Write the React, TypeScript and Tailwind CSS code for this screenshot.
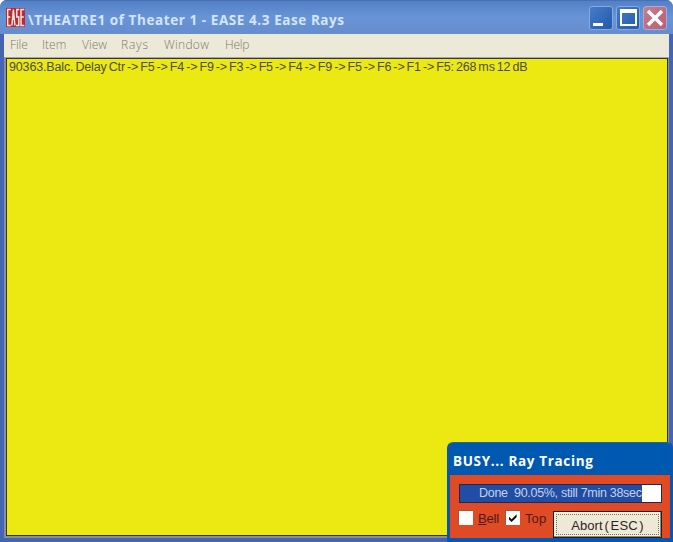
import type { ReactNode } from "react";

const menu = [
  { label: "File", cell: "w-[32px]", spacing: "tracking-[-0.1px]" },
  { label: "Item", cell: "w-[40px]", spacing: "tracking-[0px]" },
  { label: "View", cell: "w-[39px]", spacing: "tracking-[0px]" },
  { label: "Rays", cell: "w-[43px]", spacing: "tracking-[0.8px]" },
  { label: "Window", cell: "w-[61px]", spacing: "tracking-[0.3px]" },
  { label: "Help", cell: "w-[40px]", spacing: "tracking-[-0.2px]" },
];

function EaseLogo() {
  return (
    <svg width="19" height="19" viewBox="0 0 19 19" className="shrink-0">
      <rect width="19" height="19" fill="#bd2931" />
      <g stroke="#f5ece9" strokeWidth="1.4" fill="none">
        <path d="M4.8 1.5H1.7V17.5H4.8M1.7 9H4.3" />
        <path d="M5.9 17.5L7.4 1.5L8.9 17.5M6.3 11H8.6" />
        <path d="M13.2 1.5H10.8V9H12.8V17.5H10" />
        <path d="M18.3 1.5H15V17.5H18.3M15 9H17.8" />
      </g>
    </svg>
  );
}

function CaptionButton({ close = false, children }: { close?: boolean; children: ReactNode }) {
  return (
    <div
      className={
        close
          ? "h-6 w-6 rounded-[3px] border border-[#9bafe0] bg-linear-to-br from-[#cb7b8c] to-[#b95e75]"
          : "h-6 w-6 rounded-[3px] border border-[#83abdf] bg-linear-to-br from-[#457cc8] to-[#2459ac]"
      }
    >
      <svg width="22" height="22" viewBox="0 0 22 22">
        {children}
      </svg>
    </div>
  );
}

function CheckBox({ checked = false }: { checked?: boolean }) {
  return (
    <div className="h-[15px] w-[15px] shrink-0 border-t border-l border-[#9d5742] bg-[#fffdf9]">
      {checked && (
        <svg width="14" height="14" viewBox="0 0 14 14">
          <path d="M3 5.7L5.6 8.3L10.6 3.3V6.2L5.6 11L3 8.5Z" fill="#111" />
        </svg>
      )}
    </div>
  );
}

function BusyDialog() {
  return (
    <div className="absolute top-[442px] left-[447px] flex h-[100px] w-[226px] flex-col overflow-hidden rounded-t-[6px] border-x-[3px] border-t border-b-4 border-[#0857ae] border-t-[#2365a3] bg-[#e04a25]">
      <div className="flex h-8 shrink-0 items-center bg-[#0059b0] pt-[5px] pl-[3px] font-['Open_Sans',sans-serif] text-[13.5px] font-bold tracking-[0.65px] whitespace-pre text-white">
        BUSY... Ray Tracing
      </div>
      <div className="mt-[9px] ml-[9px] flex h-5 w-[203px] border border-[#24264d] bg-[#214da5] font-['Liberation_Sans',sans-serif] text-[12.5px] leading-[16px] text-[#c3d4ea]">
        <div className="w-[182px] pl-[19px] tracking-[-0.3px] whitespace-pre">Done  90.05%, still 7min 38sec</div>
        <div className="flex-1 bg-white" />
      </div>
      <div className="mt-[7px] ml-2 flex font-['Liberation_Sans',sans-serif] text-[13px] leading-[18px] text-[#4e1b18]">
        <CheckBox />
        <span className="w-8 pl-[5px] tracking-[-0.2px] whitespace-nowrap">
          <span className="underline">B</span>ell
        </span>
        <CheckBox checked />
        <span className="w-[33px] pl-[5px] tracking-[0.1px]">Top</span>
        <div className="mt-px h-[27px] w-[109px] shrink-0 border border-[#242019] bg-[#f5f0df] p-[2px] shadow-[inset_-1px_-1px_#8e8776]">
          <div className="h-[21px] border border-dotted border-[#777164] bg-[#eee8d7] text-center leading-[21px] tracking-[0.1px] [word-spacing:-2px] text-[#292721]">
            Abort ( ESC )
          </div>
        </div>
      </div>
    </div>
  );
}

export default function App() {
  return (
    <main className="relative h-[542px] w-[673px] overflow-hidden bg-white">
      <section className="flex h-full flex-col overflow-hidden rounded-t-[7px] bg-[#5373bd]">
        <header className="flex h-[34px] shrink-0 items-start bg-linear-to-b from-[#527fc4] via-[#6894d7] to-[#668dce] pl-[6px] shadow-[inset_0_1px_#4871b4]">
          <div className="mt-2">
            <EaseLogo />
          </div>
          <h1 className="mt-[10px] ml-[3px] w-[561px] font-['Open_Sans',sans-serif] text-[13.5px] leading-5 font-bold tracking-[0.57px] whitespace-nowrap text-[#d5e5ff]">
            \THEATRE1 of Theater 1 - EASE 4.3 Ease Rays
          </h1>
          <div className="mt-[6px] flex gap-[3px]">
            <CaptionButton>
              <path d="M3 16h10v3H3z" fill="white" />
            </CaptionButton>
            <CaptionButton>
              <path d="M3 2h17v17H3zM5 6v11h13V6z" fill="white" fillRule="evenodd" />
            </CaptionButton>
            <CaptionButton close>
              <path d="M4 4L18 18M18 4L4 18" stroke="white" strokeWidth="3.5" />
            </CaptionButton>
          </div>
        </header>
        <div className="flex min-h-0 flex-1 flex-col border-x-4 border-b-[4px] border-[#4664b4]">
          <nav className="flex h-[23px] shrink-0 items-center bg-[#ece9d8] pb-[2px] pl-[6px] font-['Open_Sans',sans-serif] text-[12px] font-light text-[#7c7a70]">
            {menu.map(({ label, cell, spacing }) => (
              <span key={label} className={`${cell} ${spacing} shrink-0`}>
                {label}
              </span>
            ))}
          </nav>
          <div className="min-h-0 flex-1 border-t border-r border-b-2 border-l-2 border-[#8590a4] border-t-[#aaa99d]">
            <div className="h-full border border-[#35351f] bg-[#ece811]">
              <p className="pt-px pl-[2px] font-['Liberation_Sans',sans-serif] text-[12.5px] leading-[15px] tracking-[-0.15px] [word-spacing:-1.25px] whitespace-nowrap text-[#4b5030]">
                90363.Balc. Delay Ctr -&gt; F5 -&gt; F4 -&gt; F9 -&gt; F3 -&gt; F5 -&gt; F4 -&gt; F9 -&gt; F5 -&gt; F6 -&gt; F1 -&gt; F5: 268 ms 12 dB
              </p>
            </div>
          </div>
        </div>
      </section>
      <BusyDialog />
    </main>
  );
}
